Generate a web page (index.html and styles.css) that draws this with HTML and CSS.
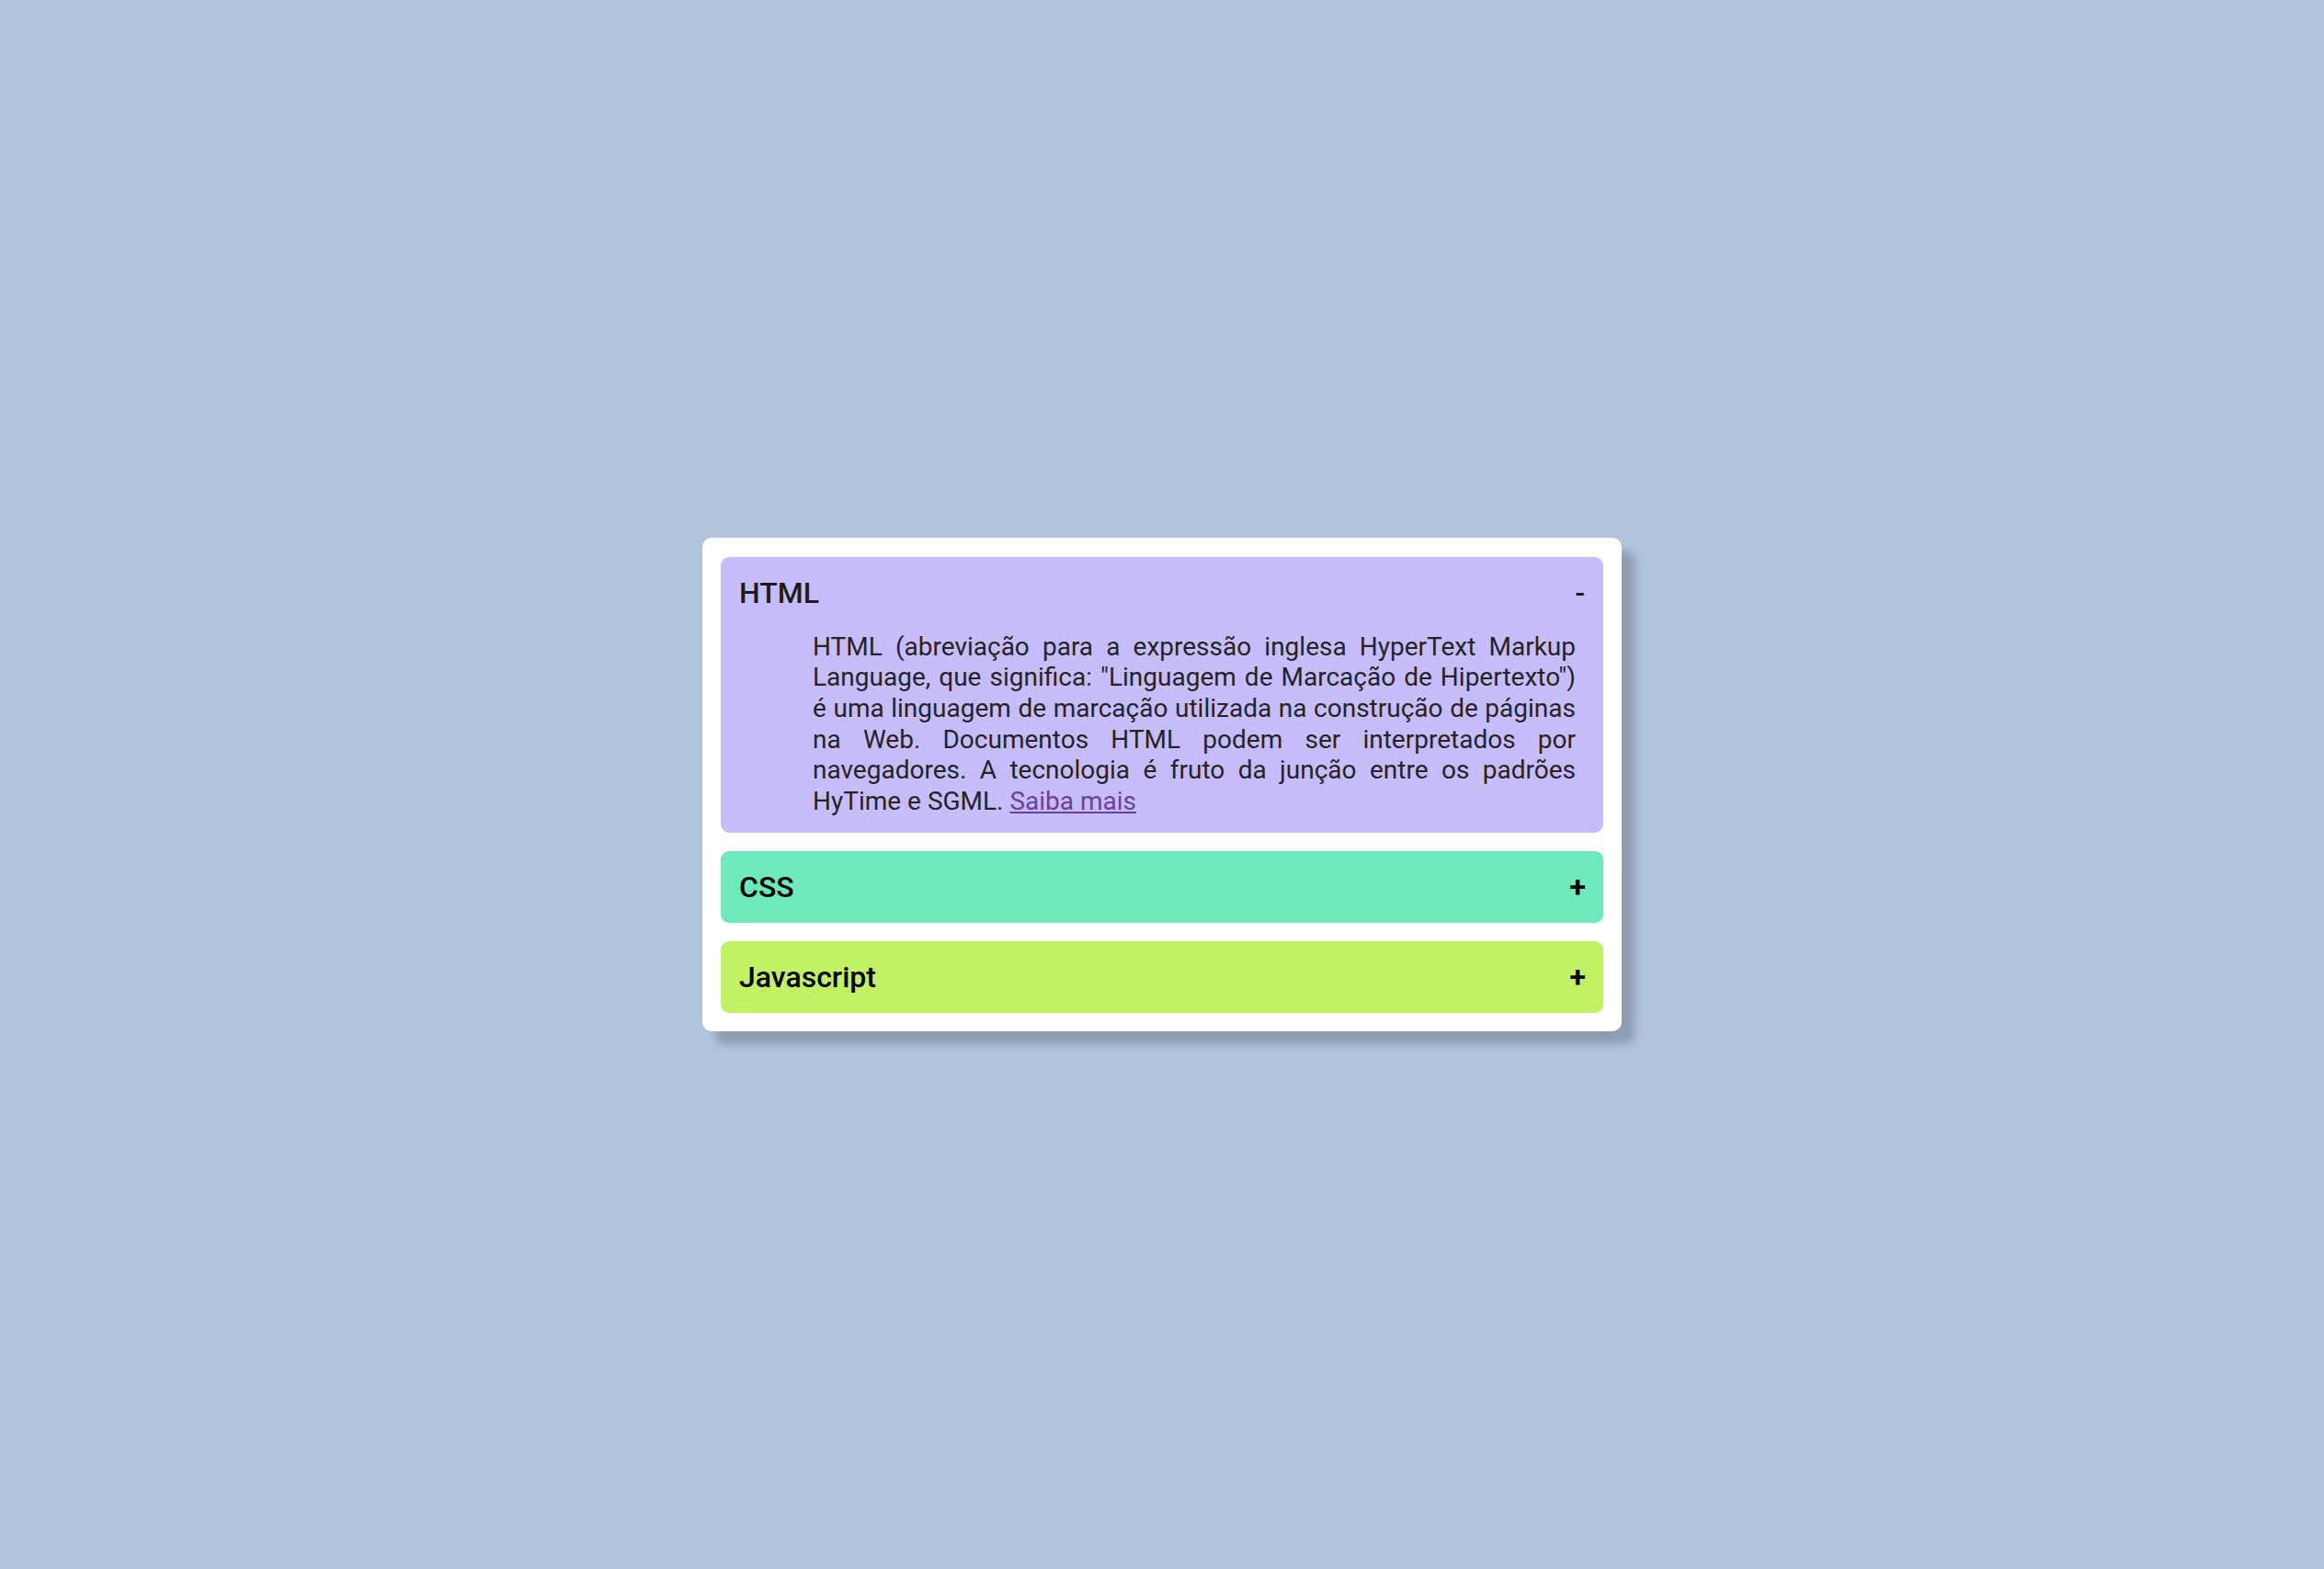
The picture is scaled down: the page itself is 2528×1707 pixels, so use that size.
FILE: index.html
```html
<!DOCTYPE html>
<html lang="pt-BR">
<head>
<meta charset="utf-8">
<title>Accordion</title>
<link rel="stylesheet" href="styles.css">
</head>
<body>
<main class="page">
  <section class="accordion">
    <div class="item item-html open">
      <div class="item-header">
        <span class="item-title">HTML</span>
        <span class="item-sign">-</span>
      </div>
      <div class="item-body">
        <p class="item-text">HTML (abreviação para a expressão inglesa HyperText Markup Language, que significa: "Linguagem de Marcação de Hipertexto") é uma linguagem de marcação utilizada na construção de páginas na Web. Documentos HTML podem ser interpretados por navegadores. A tecnologia é fruto da junção entre os padrões HyTime e SGML. <a class="more" href="#">Saiba mais</a></p>
      </div>
    </div>
    <div class="item item-css">
      <div class="item-header">
        <span class="item-title">CSS</span>
        <span class="item-sign plus">+</span>
      </div>
    </div>
    <div class="item item-js">
      <div class="item-header">
        <span class="item-title">Javascript</span>
        <span class="item-sign plus">+</span>
      </div>
    </div>
  </section>
</main>
</body>
</html>
```

FILE: styles.css
```css
* { box-sizing: border-box; }

html, body {
  margin: 0;
  padding: 0;
}

body {
  background: #b0c4de;
  font-family: Roboto, "Liberation Sans", sans-serif;
}

.page {
  min-height: 1707px;
  display: flex;
  align-items: center;
  justify-content: center;
}

.accordion {
  width: 1000px;
  background: #ffffff;
  border-radius: 10px;
  padding: 21px 20px 20px;
  display: flex;
  flex-direction: column;
  gap: 20px;
  box-shadow: 14px 14px 10px rgba(0, 0, 0, 0.2);
}

.item {
  border-radius: 9px;
}

.item-html { background: #c8bdfc; }
.item-css { background: #6ee9b9; }
.item-js { background: #c1f266; }

.item-header {
  display: flex;
  justify-content: space-between;
  align-items: center;
  padding: 20px 20px 20px 20px;
  font-size: 32px;
  font-weight: 500;
  color: #000;
}

.item-html .item-header { color: #1c1c1c; }

.item-sign {
  font-weight: 500;
}

.item-sign.plus {
  font-weight: 700;
  margin-right: -1px;
}

.item-body {
  padding: 3px 30px 18px 100px;
}

.item-text {
  margin: 0;
  font-size: 28px;
  line-height: 1.2;
  text-align: justify;
  color: #242424;
}

.more {
  color: #6b3fa0;
}
```
